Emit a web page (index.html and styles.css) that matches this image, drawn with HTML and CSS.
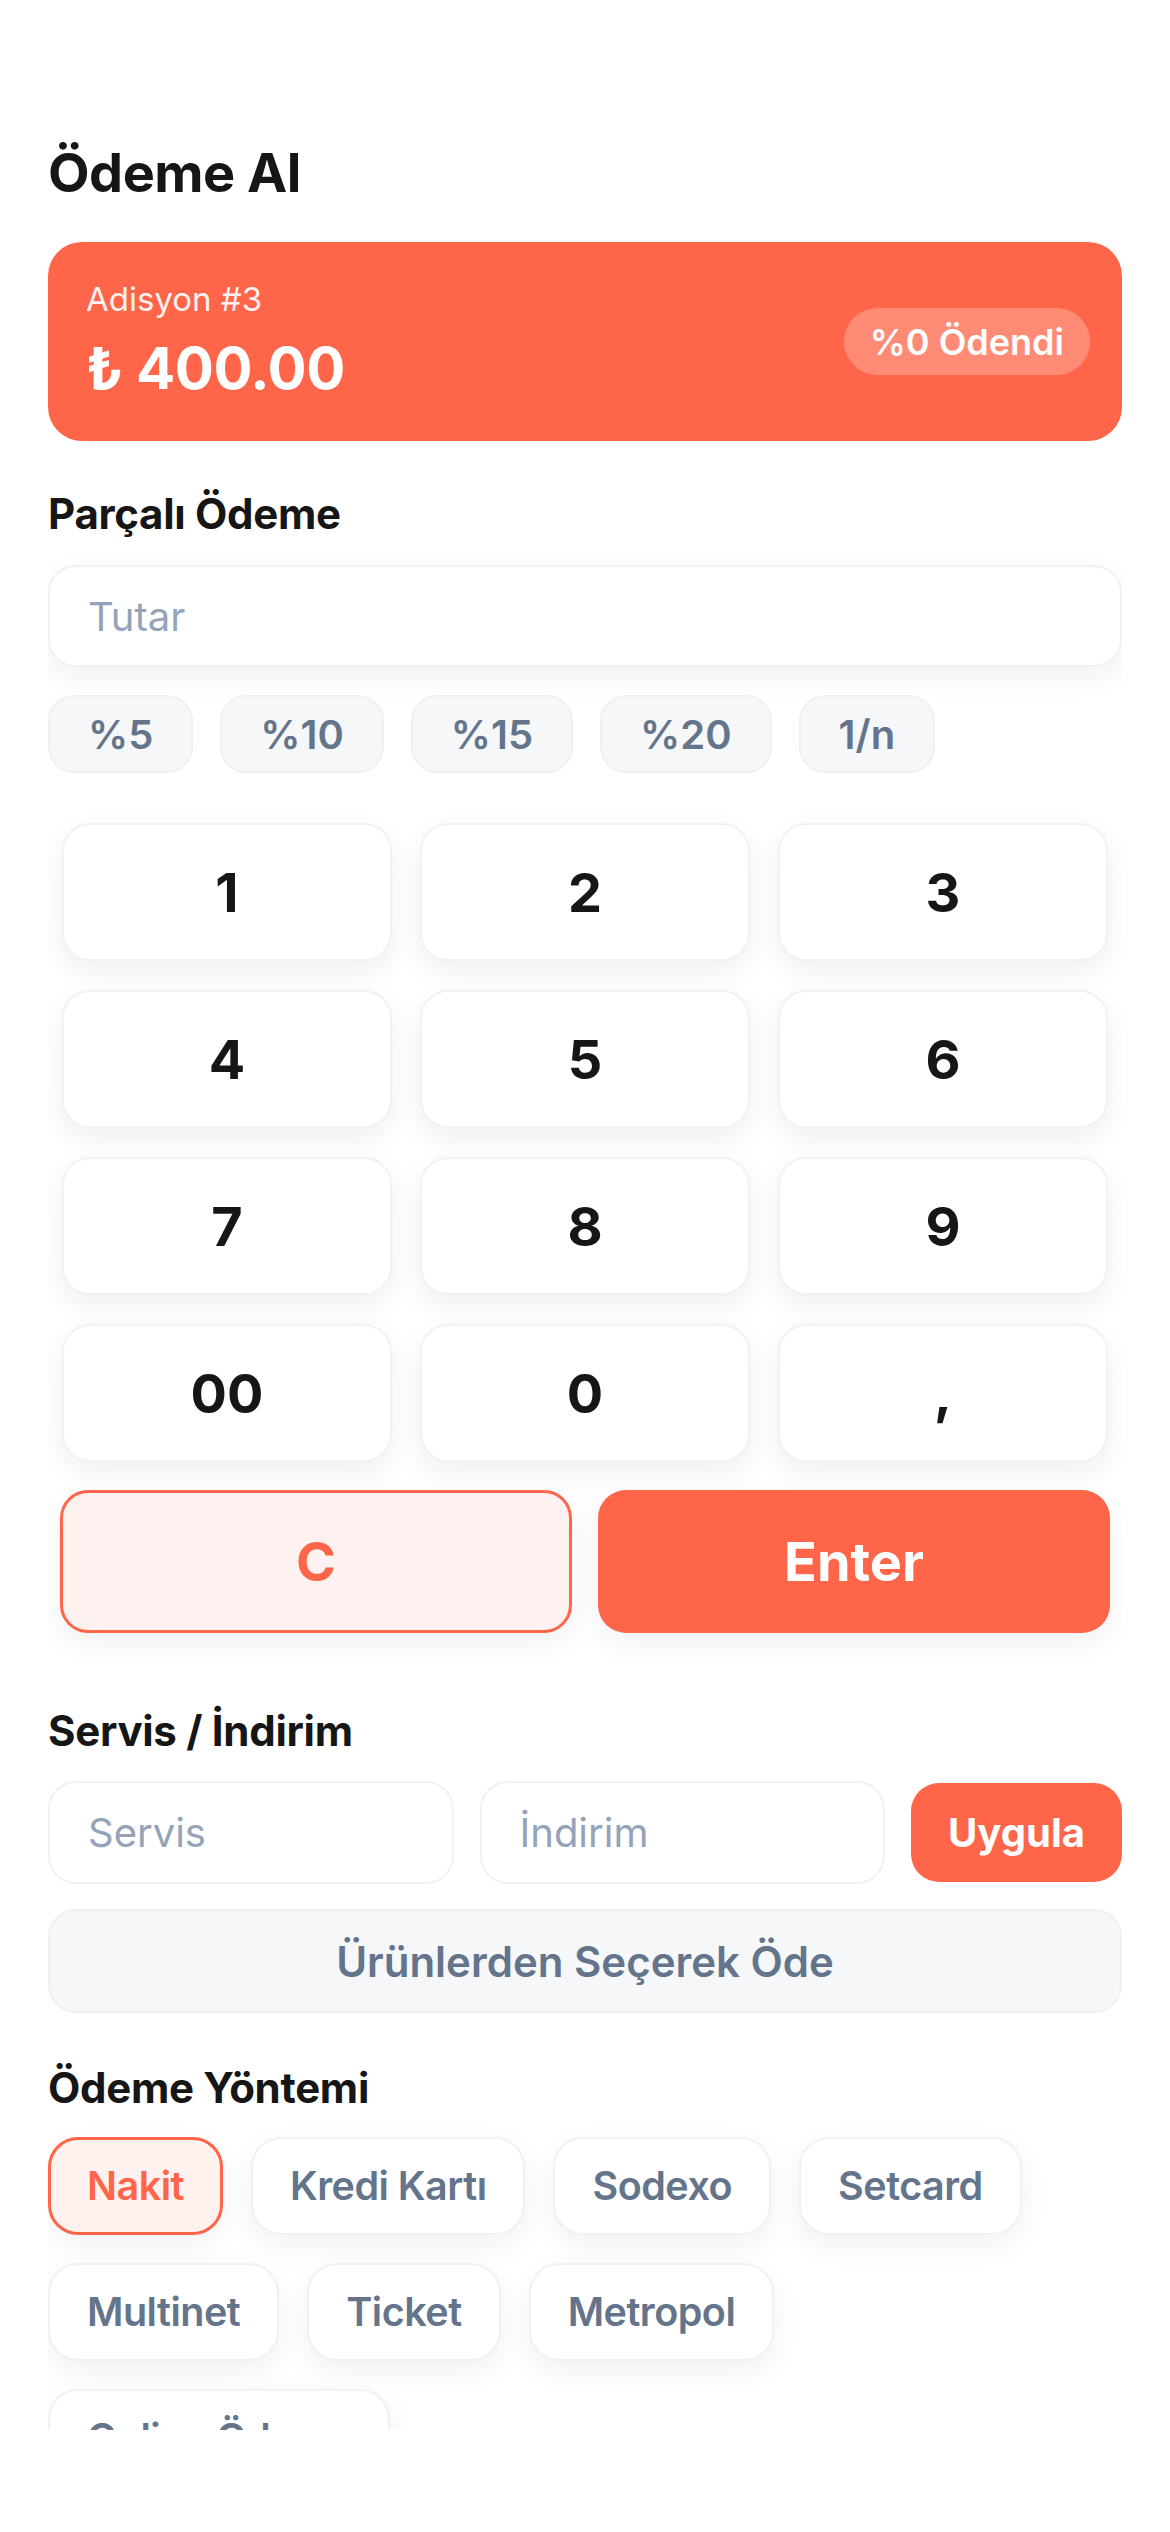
FILE: index.html
```html
<!DOCTYPE html>
<html lang="tr">
<head>
  <meta charset="UTF-8">
  <title>Ödeme Al</title>
  <link rel="stylesheet" href="styles.css">
</head>
<body>

  <div class="ekran">
    <h1 class="baslik">Ödeme Al</h1>

    <div class="ozet">
      <div>
        <div class="ozet-etiket">Adisyon #3</div>
        <div class="ozet-tutar">₺ 400.00</div>
      </div>
      <span class="odendi">%0 Ödendi</span>
    </div>

    <h2 class="bolum">Parçalı Ödeme</h2>
    <input class="alan alan-golge" type="text" placeholder="Tutar">

    <div class="hizli">
      <button class="hizli-btn">%5</button>
      <button class="hizli-btn">%10</button>
      <button class="hizli-btn">%15</button>
      <button class="hizli-btn">%20</button>
      <button class="hizli-btn">1/n</button>
    </div>

    <div class="tuslar">
      <button class="tus">1</button>
      <button class="tus">2</button>
      <button class="tus">3</button>
      <button class="tus">4</button>
      <button class="tus">5</button>
      <button class="tus">6</button>
      <button class="tus">7</button>
      <button class="tus">8</button>
      <button class="tus">9</button>
      <button class="tus">00</button>
      <button class="tus">0</button>
      <button class="tus">,</button>
    </div>

    <div class="tus-alt">
      <button class="temizle">C</button>
      <button class="gir">Enter</button>
    </div>

    <h2 class="bolum bolum-servis">Servis / İndirim</h2>
    <div class="servis-satir">
      <input class="alan" type="text" placeholder="Servis">
      <input class="alan" type="text" placeholder="İndirim">
      <button class="uygula">Uygula</button>
    </div>
    <button class="urunler">Ürünlerden Seçerek Öde</button>

    <h2 class="bolum bolum-yontem">Ödeme Yöntemi</h2>
    <div class="yontemler">
      <button class="yontem secili">Nakit</button>
      <button class="yontem">Kredi Kartı</button>
      <button class="yontem">Sodexo</button>
      <button class="yontem">Setcard</button>
      <button class="yontem">Multinet</button>
      <button class="yontem">Ticket</button>
      <button class="yontem">Metropol</button>
      <button class="yontem">Online Ödeme</button>
    </div>
  </div>

</body>
</html>
```

FILE: styles.css
```css
body {
  margin: 0;
  background: #ffffff;
  color: #161616;
  font-family: 'Inter', 'Noto Sans', sans-serif;
}

button,
input {
  font-family: inherit;
  box-sizing: border-box;
}

.ekran {
  margin: 0 48px;
  padding-top: 141px;
  height: 2430px;
  box-sizing: border-box;
  overflow: hidden;
}

.baslik {
  margin: 0 0 37px;
  font-size: 54px;
  line-height: 64px;
  font-weight: 700;
  letter-spacing: -0.5px;
}

.ozet {
  height: 199px;
  box-sizing: border-box;
  padding: 0 32px 0 38px;
  border-radius: 34px;
  background: #ff6549;
  color: white;
  display: flex;
  align-items: center;
  justify-content: space-between;
}

.ozet-etiket {
  font-size: 33px;
  line-height: 40px;
  opacity: 0.92;
}

.ozet-tutar {
  margin-top: 13px;
  font-size: 58px;
  line-height: 72px;
  font-weight: 700;
  letter-spacing: -0.5px;
}

.odendi {
  height: 67px;
  padding: 0 26px;
  border-radius: 34px;
  background: rgba(255, 255, 255, 0.25);
  font-size: 36px;
  font-weight: 600;
  display: flex;
  align-items: center;
}

.bolum {
  margin: 49px 0 27px;
  font-size: 42px;
  line-height: 48px;
  font-weight: 700;
  letter-spacing: -0.3px;
}

.bolum-servis {
  margin-top: 74px;
  margin-bottom: 26px;
}

.bolum-yontem {
  margin-top: 51px;
  margin-bottom: 25px;
}

.alan {
  display: block;
  width: 100%;
  height: 102px;
  padding: 0 38px;
  border: 2px solid #eef1f5;
  border-radius: 28px;
  background: white;
  font-size: 40px;
  color: #161616;
  outline: none;
}

.alan::placeholder {
  color: #94a3b8;
}

.alan-golge {
  box-shadow: 0 10px 30px rgba(0, 0, 0, 0.06);
}

.hizli {
  display: flex;
  gap: 27px;
  margin-top: 28px;
}

.hizli-btn {
  height: 78px;
  padding: 0 38px;
  border: 2px solid #eef0f3;
  border-radius: 26px;
  background: #f6f7f9;
  color: #64748b;
  font-size: 40px;
  font-weight: 600;
}

.tuslar {
  display: grid;
  grid-template-columns: repeat(3, 1fr);
  grid-auto-rows: 138px;
  gap: 29px 28px;
  margin: 50px 14px 0;
}

.tus {
  border: 2px solid #f0f2f6;
  border-radius: 28px;
  background: white;
  color: #161616;
  font-size: 54px;
  font-weight: 700;
  box-shadow: 0 10px 28px rgba(0, 0, 0, 0.065);
}

.tus-alt {
  display: grid;
  grid-template-columns: 1fr 1fr;
  gap: 26px;
  margin: 28px 12px 0;
}

.temizle,
.gir {
  height: 143px;
  border-radius: 28px;
  font-size: 54px;
  font-weight: 700;
  box-shadow: 0 10px 30px rgba(0, 0, 0, 0.06);
}

.temizle {
  border: 3px solid #ff6549;
  background: #fdf2f0;
  color: #ff6549;
}

.gir {
  border: none;
  background: #ff6549;
  color: white;
}

.servis-satir {
  display: flex;
  align-items: center;
  gap: 26px;
}

.servis-satir .alan {
  flex: 1;
  min-width: 0;
  height: 103px;
}

.uygula {
  flex: none;
  width: 211px;
  height: 99px;
  border: none;
  border-radius: 28px;
  background: #ff6549;
  color: white;
  font-size: 40px;
  font-weight: 700;
}

.urunler {
  display: block;
  width: 100%;
  height: 104px;
  margin-top: 25px;
  border: 2px solid #eef0f3;
  border-radius: 28px;
  background: #f6f7f9;
  color: #64748b;
  font-size: 42px;
  font-weight: 600;
}

.yontemler {
  display: flex;
  flex-wrap: wrap;
  gap: 28px 28px;
}

.yontem {
  height: 98px;
  padding: 0 37px;
  border: 2px solid #eef1f5;
  border-radius: 30px;
  background: white;
  color: #64748b;
  font-size: 39.5px;
  font-weight: 600;
  letter-spacing: -0.5px;
  box-shadow: 0 10px 30px rgba(0, 0, 0, 0.06);
}

.yontem.secili {
  padding: 0 36px;
  border: 3px solid #ff6549;
  background: #fff1ee;
  color: #ff6549;
}
```
